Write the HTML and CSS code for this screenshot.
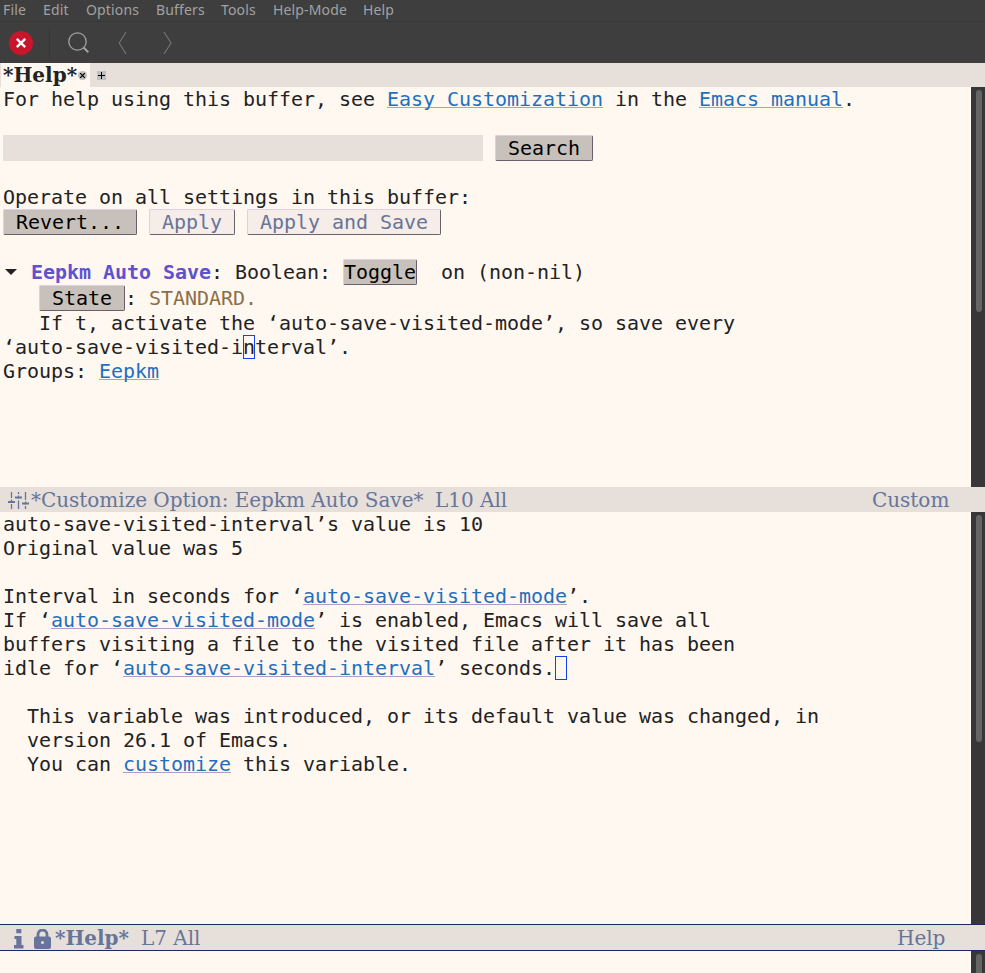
FILE: index.html
```html
<!DOCTYPE html>
<html lang="en">
<head>
<meta charset="utf-8">
<title>*Help*</title>
<link rel="stylesheet" href="styles.css">
</head>
<body>
<nav class="menubar"><span>File</span><span>Edit</span><span>Options</span><span>Buffers</span><span>Tools</span><span>Help-Mode</span><span>Help</span></nav>
<div class="toolbar">
<svg width="200" height="40" viewBox="0 0 200 40" fill="none">
<circle cx="21" cy="20" r="12" fill="#c7162b"/>
<path d="M16.8 15.8l8.4 8.4M25.2 15.8l-8.4 8.4" stroke="#fff" stroke-width="2.4"/>
<path d="M49.5 3v33" stroke="#373737"/>
<circle cx="77.5" cy="18.5" r="8.7" stroke="#a2a2a2" stroke-width="1.3"/>
<path d="M83.5 24.5l4.8 4.7" stroke="#a2a2a2" stroke-width="2"/>
<path d="M126 9l-6.8 11 6.8 11M164 9l7 11-7 11" stroke="#757575" stroke-width="1.1"/>
</svg>
</div>
<div class="tabs">
<div class="tab"><b>*Help*</b><svg class="close" width="9" height="9" viewBox="0 0 9 9"><circle cx="4.5" cy="4.5" r="4.5" fill="#bfbfbf"/><path d="M2.2 2.2l4.6 4.6M6.8 2.2L2.2 6.8" stroke="#000" stroke-width="1.2"/></svg></div>
<svg class="new" width="9" height="9" viewBox="0 0 9 9"><path d="M0 0h9v9H0z" fill="#bfbfbf"/><path d="M1 4.5h7M4.5 1v7" stroke="#000"/></svg>
</div>
<section class="window first">
<main class="buffer">
<div class="line">For help using this buffer, see <a>Easy Customization</a> in the <a>Emacs manual</a>.</div>
<div class="line"></div>
<div class="line tall"><span class="field"></span> <span class="btn"> Search </span></div>
<div class="line"></div>
<div class="line">Operate on all settings in this buffer:</div>
<div class="line tall"><span class="btn"> Revert... </span> <span class="btn off"> Apply </span> <span class="btn off"> Apply and Save </span></div>
<div class="line"></div>
<div class="line tall"><svg class="fold" width="16" height="26" viewBox="0 0 16 26"><path d="M2 10h12l-6 6z" fill="#222"/></svg> <b class="variable">Eepkm Auto Save</b>: Boolean: <span class="btn">Toggle</span>  on (non-nil)</div>
<div class="line tall">   <span class="btn"> State </span>: <span class="standard">STANDARD.</span></div>
<div class="line">   If t, activate the ‘auto-save-visited-mode’, so save every</div>
<div class="line">‘auto-save-visited-i<span class="cursor">n</span>terval’.</div>
<div class="line">Groups: <a>Eepkm</a></div>
</main>
<div class="scroll"><div class="thumb"></div></div>
</section>
<div class="modeline">
<svg class="sliders" width="21" height="20" viewBox="0 0 21 20" fill="none" stroke="#667599"><path d="M3.5 1v6M3.5 13v5M10.5 1v2M10.5 9.500v8.500M17.500 1v8M17.500 15v3" stroke-width="1.300"/><path d="M0 11h7M7 6.500h7M14 12.500h7" stroke-width="2"/><path d="M3.500 8.500v3M10.500 4.500v3M17.500 10.500v3" stroke-width="1.300"/></svg>
<span class="title">*Customize Option: Eepkm Auto Save*</span><span class="pos">L10 All</span><span class="mode custom">Custom</span>
</div>
<section class="window second">
<main class="buffer">
<div class="line">auto-save-visited-interval’s value is 10</div>
<div class="line">Original value was 5</div>
<div class="line"></div>
<div class="line">Interval in seconds for ‘<a>auto-save-visited-mode</a>’.</div>
<div class="line">If ‘<a>auto-save-visited-mode</a>’ is enabled, Emacs will save all</div>
<div class="line">buffers visiting a file to the visited file after it has been</div>
<div class="line">idle for ‘<a>auto-save-visited-interval</a>’ seconds.<span class="cursor"> </span></div>
<div class="line"></div>
<div class="line">  This variable was introduced, or its default value was changed, in</div>
<div class="line">  version 26.1 of Emacs.</div>
<div class="line">  You can <a>customize</a> this variable.</div>
</main>
<div class="scroll"><div class="thumb"></div></div>
</section>
<div class="modeline active">
<svg class="info" width="10" height="20" viewBox="0 0 10 20" fill="#667599"><path d="M2.3 0h5v4.2h-5zM.5 7h7v9h2v3.500H0V16h2.300v-6H.5z"/></svg>
<svg class="lock" width="17" height="20" viewBox="0 0 17 20"><path d="M4 9V5.500a4.500 4.500 0 0 1 9 0V9" fill="none" stroke="#667599" stroke-width="2.800"/><rect y="7.500" width="17" height="12.500" rx="2" fill="#667599"/><circle cx="8.500" cy="13.500" r="1.500" fill="#e7dfd9"/></svg>
<b class="title help">*Help*</b><span class="pos">L7 All</span><span class="mode help">Help</span>
</div>
<section class="window mini"><main class="buffer"></main><div class="scroll"><div class="thumb"></div></div></section>
</body>
</html>
```
FILE: styles.css
```css
* { box-sizing: border-box; }
body {
  margin: 0;
  width: 985px;
  height: 973px;
  overflow: hidden;
  display: flex;
  flex-direction: column;
  background: #fff8f0;
  color: #222;
}
svg { display: block; flex: none; }
.menubar {
  height: 22px;
  flex: none;
  display: grid;
  grid-template-columns: 40px 43px 70px 65px 52px 90px 40px;
  padding-left: 3px;
  background: #3e3e3e;
  border-bottom: 1px solid #383838;
  color: #a2a2a2;
  font: 14px/20px "Noto Sans", sans-serif;
  letter-spacing: 0.15px;
}
.toolbar {
  height: 41px;
  flex: none;
  padding-top: 1px;
  background: #3e3e3e;
}
.tabs {
  height: 24px;
  flex: none;
  display: flex;
  align-items: center;
  background: #e7dfd9;
}
.tab {
  width: 90px;
  height: 24px;
  padding-left: 2px;
  display: flex;
  align-items: center;
  background: #fff8f0;
  border-left: 1px solid #e7dfd9;
  font: 20px/24px "DejaVu Serif", serif;
}
.tab b { width: 75px; white-space: nowrap; }
.close { margin-top: 1px; }
.new { margin: 1px 0 0 7px; }
.window { display: flex; flex: none; }
.first { height: 400px; }
.second { height: 412px; }
.mini { height: 22px; }
.buffer {
  width: 971px;
  padding-left: 3px;
  display: flex;
  flex-direction: column;
  font: 20px/24px "DejaVu Sans Mono", monospace;
  letter-spacing: -0.041px;
}
.line { height: 24px; flex: none; white-space: pre; }
.line.tall { height: 26px; line-height: 26px; }
.line a, .field, .btn, .fold, .cursor { display: inline-block; vertical-align: top; }
.line a {
  height: 21px;
  color: #1f6fbf;
  border-bottom: 1px solid #b0a0c0;
}
.field { width: 480px; height: 26px; background: #e7dfd9; }
.btn {
  height: 26px;
  line-height: 24px;
  background: #c8c0ba;
  color: #000;
  border: 1px solid;
  border-color: #ddd0e0 #68606a #68606a #ddd0e0;
  border-radius: 2px;
}
.btn.off { background: #f6ece8; color: #667599; }
.variable { color: #6052cf; }
.standard { color: #8b6f47; }
.cursor { width: 12px; height: 24px; outline: 1px solid #1144ee; outline-offset: -1px; }
.scroll { width: 14px; background: #373737; padding: 3px 3px 0 5px; overflow: hidden; }
.thumb { width: 6px; height: 222px; border-radius: 3px; background: #656565; }
.second .thumb { height: 227px; }
.modeline {
  height: 25px;
  flex: none;
  display: flex;
  align-items: center;
  background: #e7dfd9;
  color: #667599;
  font: 20px/24px "DejaVu Serif", serif;
  letter-spacing: -0.03px;
  white-space: nowrap;
}
.sliders { margin: 2px 2px 0 8px; }
.title { width: 404px; }
.title.help { width: 86px; }
.mode { margin-left: auto; }
.mode.custom { width: 113px; }
.mode.help { width: 88px; }
.modeline.active { height: 27px; border: solid #1b2c5c; border-width: 1px 0; }
.info { margin: 3px 10px 0 14px; }
.lock { margin: 3px 4px 0 0; }
```
